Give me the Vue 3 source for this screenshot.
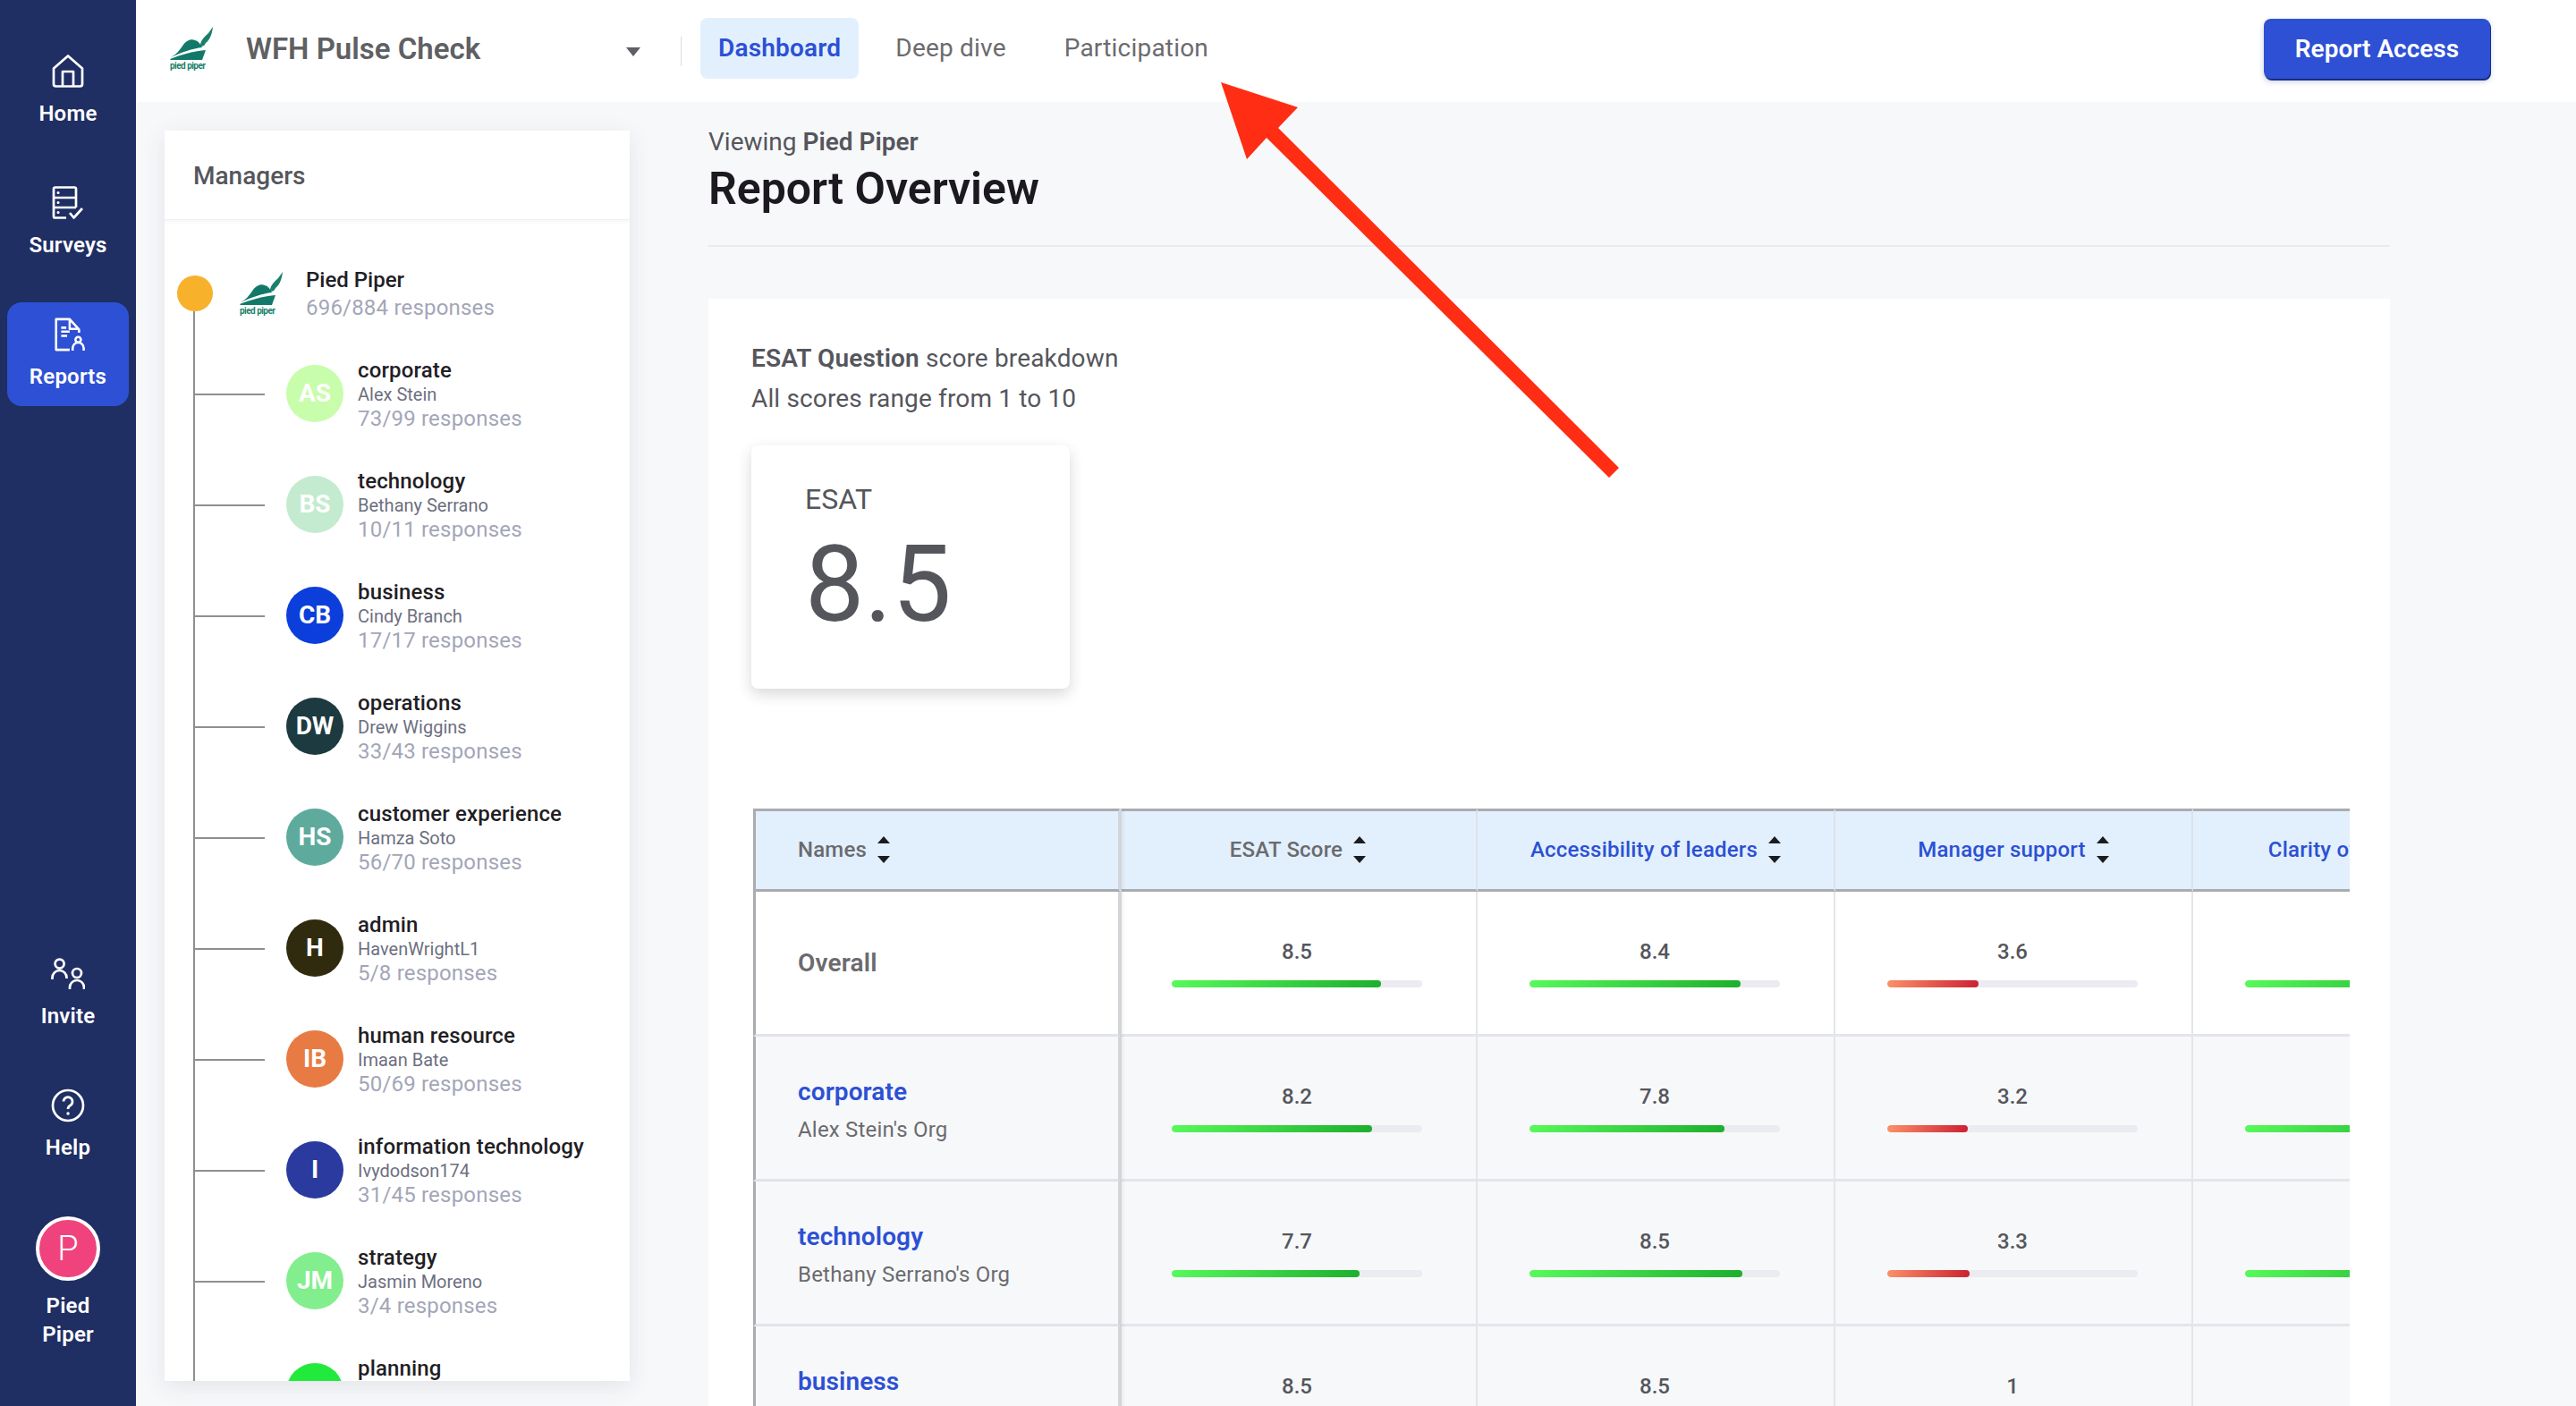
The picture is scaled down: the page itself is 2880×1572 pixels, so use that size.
<template>
  <div class="app">
    <svg class="defs" width="0" height="0">
      <symbol id="pp-logo" viewBox="0 0 52 50">
        <path d="M36 22 C36 16 41 12 45 8 L50 1 C49 9 47 15 42 19 C41 22 38 24 36 22 Z" fill="#1b7f6c" />
        <path d="M3 35 C9 32 13 27 17 21 C20 17 25 14 30 16 C34 17 36 20 38 24 C28 25 14 30 3 35 Z" fill="#12796a" />
        <path d="M2 37 C14 32 30 28 42 27 L38 38 L3 38 Z" fill="#12796a" />
        <text x="2" y="48" font-size="10" font-weight="700" fill="#1b7f6c" font-family="Roboto, sans-serif" textLength="40">pied piper</text>
      </symbol>
    </svg>

    <aside class="sidebar">
      <a class="nav-item">
        <svg class="nav-icon" viewBox="0 0 38 38">
          <path d="M3 15.5 L19 1.5 L35 15.5 V33 a2.5 2.5 0 0 1 -2.5 2.5 H5.5 A2.5 2.5 0 0 1 3 33 Z M13 35.5 V19 H25 V35.5" />
        </svg>
        <span>Home</span>
      </a>
      <a class="nav-item">
        <svg class="nav-icon" viewBox="0 0 38 38">
          <path d="M28 24 V3 a1.5 1.5 0 0 0 -1.5 -1.5 H4.5 A1.5 1.5 0 0 0 3 3 V34 a1.5 1.5 0 0 0 1.5 1.5 H17 M3 13 H28 M3 24 H28" />
          <path d="M21 30 L25.5 35.5 L35 25" />
          <path d="M8 7.5 h.1 M8 18.5 h.1 M8 29.5 h.1" stroke-linecap="round" stroke-width="3" />
        </svg>
        <span>Surveys</span>
      </a>
      <a class="nav-item active">
        <svg class="nav-icon" viewBox="0 0 38 40">
          <path d="M21 38 H5 V2 H21 L32 14 V18 M21 2 V13.5 H32 M11 12 H17 M11 16.5 H21 M11 21.5 H18" />
          <circle cx="31" cy="26" r="3.2" />
          <path d="M24.5 39 V36 a6.5 6.5 0 0 1 13 0 V39" />
        </svg>
        <span>Reports</span>
      </a>

      <a class="nav-item push">
        <svg class="nav-icon" viewBox="0 0 38 36">
          <circle cx="9.6" cy="6.6" r="5" />
          <path d="M1.5 24 V22 a8 8 0 0 1 16 0 V23" />
          <circle cx="29" cy="17" r="5" />
          <path d="M21 35 V33 a8 8 0 0 1 16 0 V35" />
        </svg>
        <span>Invite</span>
      </a>
      <a class="nav-item">
        <svg class="nav-icon" viewBox="0 0 38 38">
          <circle cx="19" cy="19" r="17" />
          <path d="M14 14.5 a5 5 0 1 1 7.5 4.5 C19.8 20 19 21 19 23" />
          <path d="M19 28 h.1" stroke-linecap="round" stroke-width="3.4" />
        </svg>
        <span>Help</span>
      </a>
      <div class="account">
        <div class="account-pic">P</div>
        <span>Pied Piper</span>
      </div>
    </aside>

    <div class="content">
      <header class="topbar">
        <svg class="logo"><use href="#pp-logo" /></svg>
        <div class="survey-title">WFH Pulse Check</div>
        <div class="caret"></div>
        <div class="top-divider"></div>
        <nav class="tabs">
          <a class="tab selected">Dashboard</a>
          <a class="tab">Deep dive</a>
          <a class="tab">Participation</a>
        </nav>
        <button class="btn-report">Report Access</button>
      </header>

      <div class="body">
        <section class="managers">
          <div class="managers-head">Managers</div>
          <div class="tree">
            <div class="tree-root">
              <div class="root-dot"></div>
              <svg class="logo root-logo"><use href="#pp-logo" /></svg>
              <div>
                <div class="root-name">Pied Piper</div>
                <div class="resp root-resp">696/884 responses</div>
              </div>
            </div>
            <div class="tree-children">
              <div v-for="m in managers" :key="m.team" class="tree-row">
                <span class="branch"></span>
                <div class="avatar" :style="{ background: m.color }">{{ m.initials }}</div>
                <div class="info">
                  <div class="team">{{ m.team }}</div>
                  <div class="person">{{ m.name }}</div>
                  <div class="resp">{{ m.resp }}</div>
                </div>
              </div>
            </div>
          </div>
        </section>

        <main class="main">
          <div class="viewing">Viewing <b>Pied Piper</b></div>
          <h1 class="page-title">Report Overview</h1>
          <div class="rule"></div>

          <div class="panel">
            <div class="panel-line"><b>ESAT Question</b> score breakdown</div>
            <div class="panel-line">All scores range from 1 to 10</div>

            <div class="esat-card">
              <div class="esat-label">ESAT</div>
              <div class="esat-value">8.5</div>
            </div>

            <div class="table-wrap">
              <table class="scores">
                <colgroup>
                  <col style="width: 410px" />
                  <col v-for="h in headers" :key="h.label" style="width: 400px" />
                </colgroup>
                <thead>
                  <tr>
                    <th class="first">
                      <span class="th-inner left">Names <i class="sort"></i></span>
                    </th>
                    <th v-for="h in headers" :key="h.label" :class="{ link: h.link }">
                      <span class="th-inner">{{ h.label }} <i class="sort"></i></span>
                    </th>
                  </tr>
                </thead>
                <tbody>
                  <tr v-for="r in rows" :key="r.name" :class="{ plain: !r.org }">
                    <td class="first">
                      <template v-if="r.org">
                        <div class="org-name">{{ r.name }}</div>
                        <div class="org-sub">{{ r.org }}</div>
                      </template>
                      <div v-else class="overall">{{ r.name }}</div>
                    </td>
                    <td v-for="(c, i) in r.cells" :key="i" class="score">
                      <div class="score-val">{{ c.v }}</div>
                      <div class="bar">
                        <div class="bar-fill" :class="{ low: c.low }" :style="{ width: c.pct + '%' }"></div>
                      </div>
                    </td>
                  </tr>
                </tbody>
              </table>
            </div>
          </div>
        </main>
      </div>
    </div>

    <!-- red annotation arrow drawn over the screenshot -->
    <svg class="annotation" viewBox="0 0 2880 1572">
      <polygon points="1365,92 1451,120 1429,143 1810,523 1799,534 1416,154 1394,178" fill="#ff2d13" />
    </svg>
  </div>
</template>

<script setup>
const managers = [
  { team: 'corporate', name: 'Alex Stein', resp: '73/99 responses', initials: 'AS', color: '#c8fdac' },
  { team: 'technology', name: 'Bethany Serrano', resp: '10/11 responses', initials: 'BS', color: '#c4ebcf' },
  { team: 'business', name: 'Cindy Branch', resp: '17/17 responses', initials: 'CB', color: '#0b3edb' },
  { team: 'operations', name: 'Drew Wiggins', resp: '33/43 responses', initials: 'DW', color: '#1c3a3f' },
  { team: 'customer experience', name: 'Hamza Soto', resp: '56/70 responses', initials: 'HS', color: '#5eab9d' },
  { team: 'admin', name: 'HavenWrightL1', resp: '5/8 responses', initials: 'H', color: '#302a0f' },
  { team: 'human resource', name: 'Imaan Bate', resp: '50/69 responses', initials: 'IB', color: '#e87b43' },
  { team: 'information technology', name: 'Ivydodson174', resp: '31/45 responses', initials: 'I', color: '#2a3a9e' },
  { team: 'strategy', name: 'Jasmin Moreno', resp: '3/4 responses', initials: 'JM', color: '#83ee8d' },
  { team: 'planning', name: '', resp: '', initials: '', color: '#22ea3c' }
];

const headers = [
  { label: 'ESAT Score', link: false },
  { label: 'Accessibility of leaders', link: true },
  { label: 'Manager support', link: true },
  { label: 'Clarity of objective', link: true }
];

const rows = [
  { name: 'Overall', org: '', cells: [
    { v: '8.5', pct: 83.6 }, { v: '8.4', pct: 84.3 }, { v: '3.6', pct: 36.4, low: true }, { v: '8.2', pct: 82 }
  ] },
  { name: 'corporate', org: "Alex Stein's Org", cells: [
    { v: '8.2', pct: 80 }, { v: '7.8', pct: 78 }, { v: '3.2', pct: 32, low: true }, { v: '8.1', pct: 81 }
  ] },
  { name: 'technology', org: "Bethany Serrano's Org", cells: [
    { v: '7.7', pct: 75 }, { v: '8.5', pct: 85 }, { v: '3.3', pct: 33, low: true }, { v: '8.0', pct: 80 }
  ] },
  { name: 'business', org: "Cindy Branch's Org", cells: [
    { v: '8.5', pct: 85 }, { v: '8.5', pct: 85 }, { v: '1', pct: 10, low: true }, { v: '8.3', pct: 83 }
  ] }
];
</script>

<style>
html, body { margin: 0; background: #f7f8fa; }
</style>

<style scoped>
.app { position: relative; display: flex; width: 2880px; height: 1572px; overflow: hidden; font-family: Roboto, "Liberation Sans", sans-serif; color: #55565c; background: #f7f8fa; }
.defs { position: absolute; }

.sidebar { width: 152px; flex: none; box-sizing: border-box; display: flex; flex-direction: column; gap: 31px; padding: 44px 8px 64px; background: #1f2e63; color: #fff; font-size: 24px; line-height: 32px; font-weight: 600; text-align: center; letter-spacing: 0.2px; }
.nav-item { display: flex; flex-direction: column; align-items: center; gap: 12px; height: 116px; box-sizing: border-box; padding-top: 17px; border-radius: 16px; }
.nav-item.active { background: #2d50d4; }
.nav-item.push { margin-top: auto; }
.nav-icon { width: 38px; height: 38px; fill: none; stroke: #fff; stroke-width: 2.7; stroke-linejoin: round; }
.account { display: flex; flex-direction: column; align-items: center; gap: 12px; margin-top: 13px; }
.account span { width: 90px; }
.account-pic { width: 72px; height: 72px; box-sizing: border-box; border: 4px solid #fff; border-radius: 50%; background: #f0437e; font-size: 38px; line-height: 64px; font-weight: 300; }

.content { flex: 1; min-width: 0; display: flex; flex-direction: column; }
.topbar { height: 114px; flex: none; box-sizing: border-box; display: flex; align-items: center; padding: 0 96px 6px 36px; background: #fff; }
.logo { width: 52px; height: 50px; flex: none; }
.survey-title { margin-left: 35px; width: 425px; font-size: 33px; font-weight: 600; color: #5f6063; }
.caret { width: 0; height: 0; border-left: 8px solid transparent; border-right: 8px solid transparent; border-top: 10px solid #5f6063; margin-top: 8px; }
.top-divider { width: 1px; height: 33px; background: #dcdde2; margin-left: 45px; margin-top: 6px; }
.tabs { display: flex; align-items: center; margin-left: 21px; gap: 1px; flex: 1; }
.tab { display: block; padding: 0 20px; height: 68px; line-height: 68px; font-size: 28px; color: #6b6b6e; border-radius: 8px; margin-right: 20px; letter-spacing: 0.2px; }
.tab:last-child { margin-left: 4px; }
.tab.selected { background: #e2f0fe; color: #2d50d4; font-weight: 600; }
.btn-report { width: 253px; height: 67px; border: none; border-radius: 8px; background: #2d50d4; color: #fff; font-family: inherit; font-size: 28px; font-weight: 600; box-shadow: 1px 2px 0 #1a2f80, 0 3px 6px rgba(30, 50, 120, 0.25); }

.body { flex: 1; min-height: 0; display: flex; align-items: flex-start; }
.managers { width: 520px; height: 1398px; margin: 32px 0 0 32px; flex: none; overflow: hidden; background: #fff; box-shadow: 0 6px 24px rgba(60, 60, 80, 0.1); }
.managers-head { height: 100px; box-sizing: border-box; padding: 2px 0 0 32px; line-height: 98px; font-size: 28px; font-weight: 500; border-bottom: 1px solid #f1f1f5; box-shadow: 0 2px 6px rgba(60, 60, 80, 0.05); }
.tree { padding-top: 62px; }
.tree-root { display: flex; align-items: center; padding-left: 14px; height: 40px; }
.root-dot { width: 40px; height: 40px; border-radius: 50%; background: #f8b12b; flex: none; }
.root-logo { margin-left: 28px; margin-right: 24px; }
.root-name { font-size: 24px; line-height: 31px; font-weight: 500; color: #1f2024; padding-top: 2px; }
.resp { font-size: 24px; line-height: 27px; color: #a3a6b8; letter-spacing: 0.2px; min-height: 27px; }
.root-resp { line-height: 31px; }
.tree-children { margin-left: 32px; padding-top: 30px; border-left: 2px solid #8f8f8f; }
.tree-row { display: flex; align-items: center; height: 124px; }
.branch { width: 78px; height: 2px; background: #8f8f8f; flex: none; margin-top: 2px; }
.avatar { width: 64px; height: 64px; border-radius: 50%; margin-left: 24px; flex: none; text-align: center; line-height: 64px; color: #fff; font-size: 28px; font-weight: 700; }
.info { margin-left: 16px; padding-top: 2px; }
.team { font-size: 24px; line-height: 27px; font-weight: 500; color: #1f2024; white-space: nowrap; letter-spacing: 0.15px; }
.person { font-size: 20px; line-height: 27px; color: #6d6f80; min-height: 27px; }

.main { flex: 1; min-width: 0; margin-left: 88px; padding-top: 27px; width: 1880px; }
.viewing { font-size: 28px; line-height: 36px; }
.viewing b { font-weight: 600; }
.page-title { margin: 4px 0 0; font-size: 50px; line-height: 60px; font-weight: 600; color: #1c1a20; }
.rule { height: 2px; margin-top: 33px; background: #eaeaf1; width: 1880px; }
.panel { margin-top: 58px; width: 1880px; box-sizing: border-box; padding: 44px 45px 0 48px; background: #fff; height: 1300px; }
.panel-line { font-size: 28px; line-height: 45px; letter-spacing: 0.15px; }
.panel-line b { font-weight: 600; }
.esat-card { width: 356px; height: 272px; margin-top: 30px; box-sizing: border-box; padding: 38px 0 0 60px; background: #fff; border-radius: 8px; box-shadow: 0 6px 16px rgba(40, 40, 50, 0.18); }
.esat-label { font-size: 32px; line-height: 44px; }
.esat-value { font-size: 118px; line-height: 136px; margin-top: 6px; }

.table-wrap { margin: 134px 0 0 2px; width: 1785px; overflow: hidden; }
.scores { width: 2010px; table-layout: fixed; border-collapse: separate; border-spacing: 0; }
.scores th { height: 87px; padding: 0 0 2px; box-sizing: content-box; background: #e2f0fe; border-top: 3px solid #aaacb0; border-bottom: 3px solid #aaacb0; border-right: 2px solid #dfe1e8; font-size: 24px; font-weight: 500; color: #6b6b6e; white-space: nowrap; letter-spacing: 0.2px; }
.scores th { height: 85px; }
.scores th.link { color: #2d50d4; }
.scores .first { position: relative; border-left: 3px solid #aaacb0; border-right: 2px solid #d4d5da; box-shadow: 2px 0 0 #d4d5da, 4px 0 3px rgba(0, 0, 0, 0.05); text-align: left; }
.th-inner { display: inline-flex; align-items: center; gap: 12px; }
.th-inner.left { padding-left: 47px; }
.sort { position: relative; display: inline-block; width: 14px; height: 30px; }
.sort::before, .sort::after { content: ""; position: absolute; left: 0; border-left: 7px solid transparent; border-right: 7px solid transparent; }
.sort::before { top: 0; border-bottom: 8px solid #1c1c20; }
.sort::after { bottom: 0; border-top: 8px solid #1c1c20; }
.scores td { height: 159px; padding: 0; background: #f7f8fa; border-bottom: 3px solid #e4e5ea; border-right: 2px solid #e4e5ea; }
.scores tr.plain td { background: #fff; }
.scores td.first { padding-left: 47px; border-right: 2px solid #d4d5da; }
.overall { font-size: 28px; font-weight: 600; color: #6b6b6e; letter-spacing: 0.2px; }
.org-name { font-size: 28px; line-height: 36px; font-weight: 600; color: #2d50d4; margin-top: 4px; letter-spacing: 0.1px; }
.org-sub { font-size: 24px; line-height: 32px; margin-top: 8px; color: #6b6b6e; letter-spacing: 0.2px; }
.scores td.score { text-align: center; vertical-align: top; padding: 51px 2px 0 0; box-sizing: border-box; }
.score-val { font-size: 24px; line-height: 32px; font-weight: 500; }
.bar { width: 280px; height: 8px; margin: 16px auto 0; border-radius: 4px; background: #ebebf1; overflow: hidden; }
.bar-fill { height: 100%; border-radius: 4px; background: linear-gradient(90deg, #57f95a, #1daf2d); }
.bar-fill.low { background: linear-gradient(90deg, #fb9068, #cc2233); }

.annotation { position: absolute; left: 0; top: 0; width: 2880px; height: 1572px; pointer-events: none; }
</style>
